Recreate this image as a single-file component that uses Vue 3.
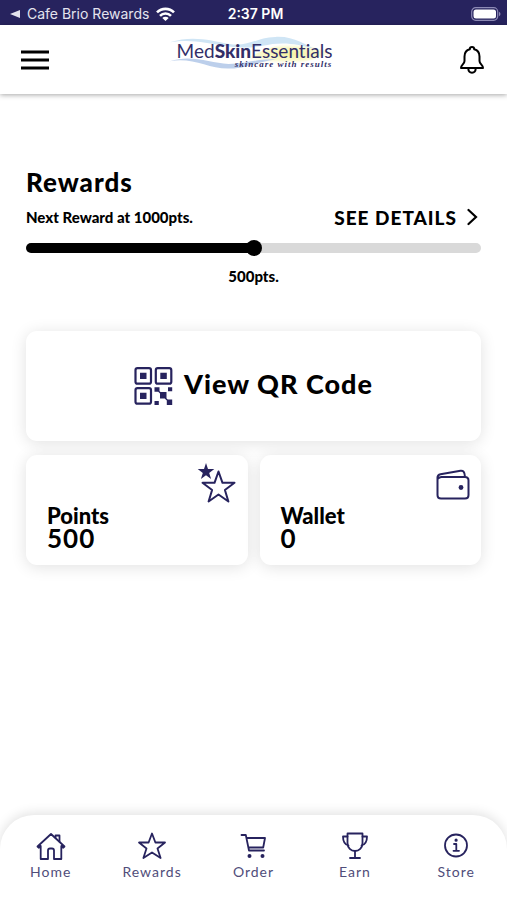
<!-- App.vue - Rewards home screen -->
<template>
  <div class="app">
    <div class="status-bar">
      <a class="status-back" href="#">
        <svg width="10" height="8" viewBox="0 0 10 8"><path d="M0 4 10 0v8z" fill="currentColor" /></svg>
        <span>Cafe Brio Rewards</span>
        <svg width="19" height="14" viewBox="0 0 19 14" fill="none" stroke="#fff" stroke-width="2.6">
          <path d="M1 5.4a12 12 0 0 1 17 0M4 8.800a7.800 7.800 0 0 1 11 0" />
          <path d="M9.500 14 6.300 11a4.500 4.500 0 0 1 6.400 0z" fill="#fff" stroke="none" />
        </svg>
      </a>
      <span class="status-time">2:37 PM</span>
      <svg class="battery" width="30" height="14" viewBox="0 0 30 14">
        <rect x="0.7" y="0.7" width="26" height="12.600" rx="4" fill="none" stroke="#8d8ab5" stroke-width="1.2" />
        <rect x="2.500" y="2.500" width="22.500" height="9" rx="2.500" fill="#fff" />
        <path d="M28 4.800c2 .8 2 3.600 0 4.400z" fill="#8d8ab5" />
      </svg>
    </div>

    <header class="header">
      <button class="icon-button" aria-label="Menu">
        <svg width="28" height="20" viewBox="0 0 28 20"><path d="M0 2h28M0 10h28M0 18h28" stroke="#000" stroke-width="3" /></svg>
      </button>
      <a class="logo" href="#">
        <svg class="logo-wave" viewBox="0 0 176 40" preserveAspectRatio="none">
          <defs>
            <radialGradient id="glow">
              <stop offset="0" stop-color="#f4f3a0" />
              <stop offset="0.6" stop-color="#f8f7c0" stop-opacity="0.8" />
              <stop offset="1" stop-color="#fffef0" stop-opacity="0" />
            </radialGradient>
          </defs>
          <path d="M70 28C92 20 108 7 130 8c17 1 25 10 46 10-18 2-27 9-42 12-20 3-40 2-64-2z" fill="url(#glow)" />
          <path d="M1 7C24-1 43 5 62 9c20 3 26-7 47-8 20-1 30 9 42 14-18-6-31-8-45-6-17 4-28 5-48 2C38 8 23 3 1 7z" fill="#cfe5f5" />
          <path d="M1 28c22-8 41 2 60 3 20 0 28-6 48-5-21 3-30 11-49 10C40 36 23 23 1 28z" fill="#bccfeb" />
        </svg>
        <span class="logo-name">Med<b>Skin</b>Essentials</span>
        <span class="logo-tagline">skincare with results</span>
      </a>
      <button class="icon-button" aria-label="Notifications">
        <svg width="24" height="28" viewBox="0 0 24 28" fill="none" stroke="#000" stroke-width="2" stroke-linejoin="round" stroke-linecap="round">
          <path d="M12 1c-1.400 0-2.200 1-2.200 2.300C6.300 4.200 4.500 7 4.500 10.500V15c0 3-3.500 3.800-3.500 7h22c0-3.200-3.500-4-3.500-7v-4.500c0-3.500-1.800-6.300-5.300-7.200C14.200 2 13.400 1 12 1z" />
          <path d="M8.300 22.500c.2 5.600 7.200 5.600 7.400 0" />
        </svg>
      </button>
    </header>

    <main class="content">
      <section class="rewards">
        <h1>Rewards</h1>
        <div class="rewards-row">
          <label for="progress">Next Reward at {{ goal }}pts.</label>
          <a class="details" href="#">
            <span>SEE DETAILS</span>
            <svg width="11" height="18" viewBox="0 0 11 18"><path d="m1.500 2 7.500 7-7.500 7" fill="none" stroke="#000" stroke-width="2.200" stroke-linecap="round" /></svg>
          </a>
        </div>
        <input
          id="progress"
          v-model="points"
          class="progress"
          type="range"
          min="0"
          :max="goal"
          :style="{ '--filled': filled }"
        />
        <output class="progress-value" for="progress">{{ points }}pts.</output>
      </section>

      <section class="cards">
        <button class="card card-qr">
          <svg width="39" height="38" viewBox="0 0 39 38">
            <g fill="none" stroke="#27235e" stroke-width="2.200">
              <rect x="1.500" y="1.200" width="15.500" height="15.500" rx="2" />
              <rect x="21.800" y="1.200" width="15.500" height="15.500" rx="2" />
              <rect x="1.500" y="21.200" width="15.500" height="15.500" rx="2" />
            </g>
            <path
              fill="#27235e"
              d="M6 5.800h6.500v6.300H6zM26.300 5.800h6.500v6.300h-6.500zM6 25.800h6.500v6.300H6zM20.500 20.200h5v4.500h-5zM34 20.200h4.200v4H34zM26 25h6.500v6.500H26zM20.500 34h4.300v4h-4.300zM32.800 32.500h5.400V38h-5.400zM25 23.500l2.500 2.500-1 1-2.500-2.500zM31.500 30.300l2.500 2.500-1 1-2.500-2.500z"
            />
          </svg>
          <span class="qr-label">View QR Code</span>
        </button>

        <button class="card card-stat">
          <svg class="card-icon" width="40" height="42" viewBox="0 0 40 42">
            <path d="m9 1 2 6h6.300l-5.100 3.900 1.900 6.100L9 13.300 3.900 17l1.900-6.100L.7 7H7z" fill="#27235e" />
            <path d="m21.500 9.500 4 11.300h12l-9.600 7.200 3.500 11.500-9.900-7-9.900 7L15.100 28l-9.600-7.200h12z" fill="#fff" stroke="#27235e" stroke-width="2" stroke-linejoin="round" />
          </svg>
          <span class="stat-label">Points</span>
          <span class="stat-value">{{ points }}</span>
        </button>

        <button class="card card-stat">
          <svg class="card-icon" width="34" height="42" viewBox="0 0 34 42" fill="none" stroke="#27235e" stroke-width="2" stroke-linejoin="round">
            <path d="M1.500 17c0 0 2-2 4-2h23.500q3.500 0 3.500 3.500V33q0 3.500-3.500 3.500H5q-3.500 0-3.500-3.500V15.500q0-2.700 3-3.300L24.500 8.700c2.500-.4 4.200 1 4.500 6.300" />
            <circle cx="25" cy="25.500" r="2.400" fill="#27235e" stroke="none" />
          </svg>
          <span class="stat-label">Wallet</span>
          <span class="stat-value">{{ wallet }}</span>
        </button>
      </section>
    </main>

    <nav class="tabs">
      <a v-for="tab in tabs" :key="tab.label" class="tab" href="#">
        <svg width="30" height="28" viewBox="0 0 30 28" fill="none" stroke="#27235e" stroke-width="1.800" stroke-linejoin="round" stroke-linecap="round">
          <path v-for="d in tab.paths" :key="d" :d="d" />
          <path v-if="tab.solid" :d="tab.solid" fill="#27235e" stroke="none" />
        </svg>
        <span>{{ tab.label }}</span>
      </a>
    </nav>
  </div>
</template>

<script setup>
import { ref, computed } from 'vue';

const goal = 1000;
const points = ref(500);
const wallet = ref(0);

const filled = computed(() => (points.value / goal) * 100 + '%');

const tabs = [
  {
    label: 'Home',
    paths: [
      'M1.500 14.500 15 2l13.500 12.500-1.200 1.200-2-1.700v13h-7.300v-8.500q0-2-2-2h-2q-2 0-2 2V27H4.700V14l-2 1.700z',
      'M19.500 5.500V3.500H23.500v6'
    ]
  },
  {
    label: 'Rewards',
    paths: ['m15 1.500 3.400 9h9.600l-7.500 6 3.100 9.500-8.600-5.600L6.400 26l3.100-9.500-7.500-6h9.600z']
  },
  {
    label: 'Order',
    paths: ['M3.500 3h4.300l3.200 15.500h15M8.600 6h18.400l-1.800 9.500H10.500'],
    solid: 'M9.500 24a2 2 0 1 0 4 0a2 2 0 1 0-4 0M22.500 24a2 2 0 1 0 4 0a2 2 0 1 0-4 0'
  },
  {
    label: 'Earn',
    paths: [
      'M7.500 1.500h15v9.500c0 5-3.500 8-7.500 8s-7.500-3-7.500-8z',
      'M7.500 4.500H3c0 5 1.500 8 5.500 9M22.500 4.500H27c0 5-1.500 8-5.500 9M15 19v7M10 26h10'
    ]
  },
  {
    label: 'Store',
    paths: ['M4 13.500a11 11 0 1 0 22 0a11 11 0 1 0-22 0', 'M13 12h2.300v6.500M12.500 18.800h5.500'],
    solid: 'M13.500 8.200a1.600 1.600 0 1 0 3.200 0a1.600 1.600 0 1 0-3.200 0'
  }
];
</script>

<style>
body {
  margin: 0;
  background: #fff;
}
</style>

<style scoped>
.app {
  display: flex;
  flex-direction: column;
  min-height: 100vh;
  overflow: hidden;
  font-family: Lato, sans-serif;
  color: #000;
}

a {
  color: inherit;
  text-decoration: none;
}

button {
  padding: 0;
  border: none;
  background: none;
  color: inherit;
  font-family: inherit;
  cursor: pointer;
}

svg {
  display: block;
  flex-shrink: 0;
}

.status-bar {
  display: grid;
  grid-template-columns: 1fr auto 1fr;
  align-items: center;
  height: 25px;
  padding: 2px 6px 0 10px;
  box-sizing: border-box;
  background: #27235e;
  color: #fff;
  font-family: Inter, sans-serif;
  font-size: 14px;
}

.status-back {
  display: flex;
  align-items: center;
  gap: 7px;
  color: #e4e3ee;
  white-space: nowrap;
}

.status-time {
  font-size: 14px;
  font-weight: 600;
}

.battery {
  justify-self: end;
}

.header {
  display: flex;
  justify-content: space-between;
  align-items: center;
  height: 69px;
  padding: 0 23px 0 21px;
  box-shadow: 0 1px 5px rgba(0, 0, 0, 0.35);
}

.icon-button {
  display: flex;
}

.logo {
  position: relative;
  display: flex;
  flex-direction: column;
  align-items: flex-end;
  padding-bottom: 12px;
  color: #322e68;
}

.logo-wave {
  position: absolute;
  left: -8px;
  top: -5px;
  width: calc(100% + 16px);
  height: 36px;
}

.logo-name {
  position: relative;
  font-size: 19px;
  font-variant-ligatures: none;
  line-height: 20px;
}

.logo-name b {
  font-weight: 900;
}

.logo-tagline {
  position: relative;
  font-family: "Liberation Serif", serif;
  font-size: 9px;
  font-style: italic;
  font-weight: 700;
  line-height: 6px;
  letter-spacing: 1px;
}

.content {
  flex: 1;
  padding: 72px 26px 40px;
}

.rewards {
  display: flex;
  flex-direction: column;
}

.rewards h1 {
  margin: 0;
  font-size: 26px;
  font-weight: 900;
  line-height: 32px;
  letter-spacing: 1px;
}

.rewards-row {
  display: flex;
  justify-content: space-between;
  align-items: center;
  height: 38px;
  font-size: 15px;
  font-weight: 900;
}

.details {
  display: flex;
  align-items: center;
  gap: 10px;
  padding-right: 3px;
  font-size: 19px;
  letter-spacing: 1px;
}

.progress {
  appearance: none;
  width: 100%;
  height: 10px;
  margin: 7px 0;
  border-radius: 5px;
  background: linear-gradient(to right, #000 var(--filled), #d9d9d9 var(--filled));
}

.progress::-webkit-slider-thumb {
  appearance: none;
  width: 16px;
  height: 16px;
  border-radius: 50%;
  background: #000;
}

.progress-value {
  margin-top: 6px;
  text-align: center;
  font-size: 15px;
  font-weight: 900;
  line-height: 20px;
}

.cards {
  display: grid;
  grid-template-columns: 1fr 1fr;
  gap: 14px 12px;
  margin-top: 45px;
}

.card {
  position: relative;
  display: flex;
  height: 110px;
  border-radius: 11px;
  background: #fff;
  box-shadow: 0 2px 16px rgba(0, 0, 0, 0.12);
}

.card-qr {
  grid-column: 1 / -1;
  justify-content: center;
  align-items: center;
  gap: 11px;
  font-size: 27px;
  font-weight: 900;
  letter-spacing: 1px;
}

.qr-label {
  padding-bottom: 6px;
}

.card-stat {
  flex-direction: column;
  justify-content: flex-end;
  align-items: flex-start;
  padding: 0 21px 16px;
  font-size: 22px;
  line-height: 22px;
}

.card-icon {
  position: absolute;
  top: 7px;
  right: 11px;
}

.stat-label {
  font-weight: 900;
}

.stat-value {
  font-size: 26px;
  font-weight: 700;
  letter-spacing: 1px;
}

.tabs {
  display: grid;
  grid-template-columns: repeat(5, 1fr);
  padding: 17px 0 18px;
  border-radius: 34px 34px 0 0;
  background: #fff;
  box-shadow: 0 -2px 12px rgba(0, 0, 0, 0.12);
}

.tab {
  display: flex;
  flex-direction: column;
  align-items: center;
  gap: 2px;
  color: #504d7a;
  font-size: 14px;
  line-height: 20px;
  letter-spacing: 1px;
}
</style>
